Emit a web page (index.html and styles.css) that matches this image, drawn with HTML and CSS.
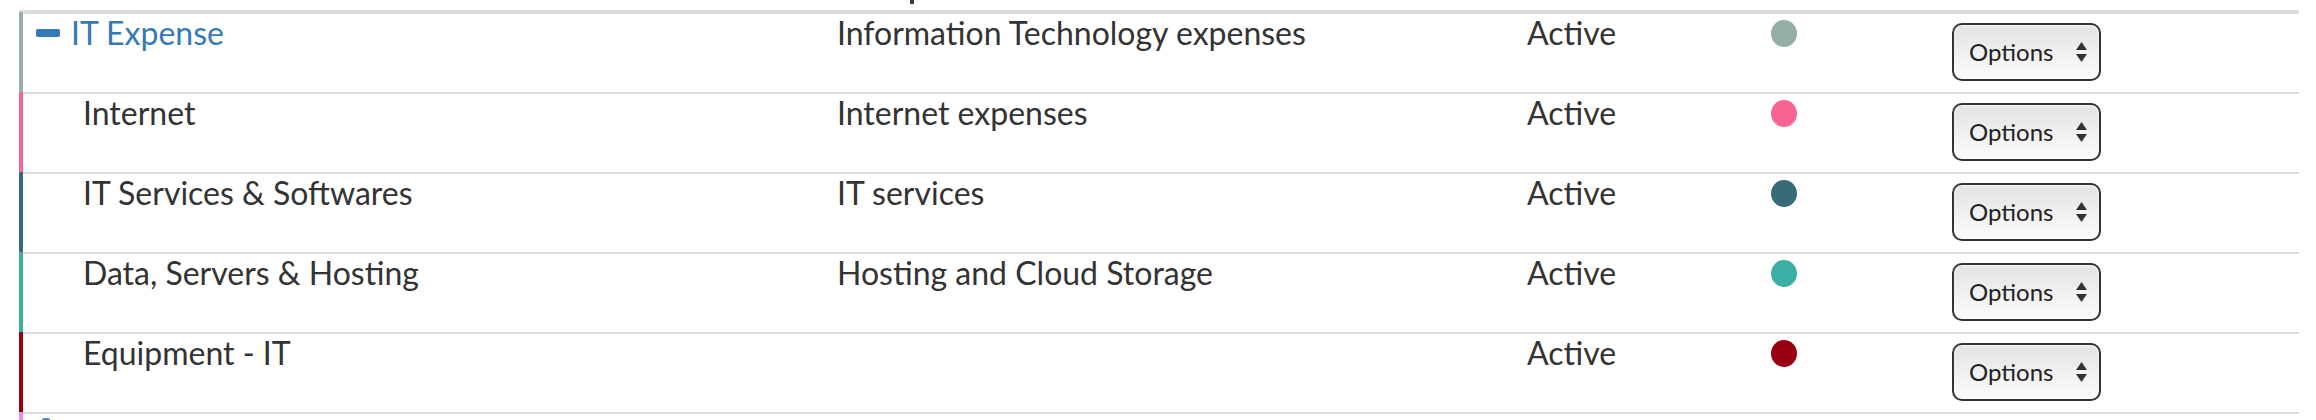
FILE: index.html
```html
<!DOCTYPE html>
<html>
<head>
<meta charset="utf-8">
<link rel="stylesheet" href="styles.css">
</head>
<body>
<div class="top-strip"><span class="tick"></span></div>
<div class="table">
  <div class="row parent" style="--c:#96afa4">
    <div class="cell c1"><span class="minus"></span><a class="link">IT Expense</a></div>
    <div class="cell c2">Information Technology expenses</div>
    <div class="cell c3">Active</div>
    <div class="cell c4"><span class="dot"></span></div>
    <div class="cell c5"><div class="select"><span>Options</span><svg class="arrows" width="11" height="20" viewBox="0 0 11 20"><path d="M5.5 0L11 8H0Z M0 12H11L5.5 20Z" fill="#333"/></svg></div></div>
  </div>
  <div class="row" style="--c:#f86391">
    <div class="cell c1 child">Internet</div>
    <div class="cell c2">Internet expenses</div>
    <div class="cell c3">Active</div>
    <div class="cell c4"><span class="dot"></span></div>
    <div class="cell c5"><div class="select"><span>Options</span><svg class="arrows" width="11" height="20" viewBox="0 0 11 20"><path d="M5.5 0L11 8H0Z M0 12H11L5.5 20Z" fill="#333"/></svg></div></div>
  </div>
  <div class="row" style="--c:#386b7a">
    <div class="cell c1 child">IT Services &amp; Softwares</div>
    <div class="cell c2">IT services</div>
    <div class="cell c3">Active</div>
    <div class="cell c4"><span class="dot"></span></div>
    <div class="cell c5"><div class="select"><span>Options</span><svg class="arrows" width="11" height="20" viewBox="0 0 11 20"><path d="M5.5 0L11 8H0Z M0 12H11L5.5 20Z" fill="#333"/></svg></div></div>
  </div>
  <div class="row" style="--c:#3aafa3">
    <div class="cell c1 child">Data, Servers &amp; Hosting</div>
    <div class="cell c2">Hosting and Cloud Storage</div>
    <div class="cell c3">Active</div>
    <div class="cell c4"><span class="dot"></span></div>
    <div class="cell c5"><div class="select"><span>Options</span><svg class="arrows" width="11" height="20" viewBox="0 0 11 20"><path d="M5.5 0L11 8H0Z M0 12H11L5.5 20Z" fill="#333"/></svg></div></div>
  </div>
  <div class="row" style="--c:#99000f">
    <div class="cell c1 child">Equipment - IT</div>
    <div class="cell c2"></div>
    <div class="cell c3">Active</div>
    <div class="cell c4"><span class="dot"></span></div>
    <div class="cell c5"><div class="select"><span>Options</span><svg class="arrows" width="11" height="20" viewBox="0 0 11 20"><path d="M5.5 0L11 8H0Z M0 12H11L5.5 20Z" fill="#333"/></svg></div></div>
  </div>
  <div class="row" style="--c:#e592e6">
    <div class="cell c1"><span class="plus"></span></div>
  </div>
</div>
</body>
</html>
```
FILE: styles.css
```css
html, body {
  margin: 0;
  padding: 0;
  background: #fff;
  overflow: hidden;
}
body {
  font-family: Lato, "Open Sans", sans-serif;
  font-size: 32px;
  color: #333;
}
.top-strip {
  height: 10px;
  padding-left: 910px;
  box-sizing: border-box;
}
.tick {
  display: block;
  width: 4px;
  height: 4px;
  background: #3a3a3a;
}
.table {
  margin-left: 19px;
  width: 2280px;
  border-top: 2px solid #ddd;
}
.row {
  display: grid;
  grid-template-columns: 814px 690px 244px 181px 1fr;
  height: 80px;
  box-sizing: border-box;
  border-left: 4px solid var(--c);
  box-shadow: inset 0 2px 0 #ddd;
  --c: #ccc;
}
.cell {
  padding-top: 2px;
  line-height: 38px;
  white-space: nowrap;
}
.c1 {
  display: flex;
  align-items: center;
  align-self: start;
  height: 38px;
  padding-left: 13px;
}
.c1.child {
  padding-left: 60px;
}
.minus {
  display: inline-block;
  width: 24px;
  height: 8px;
  border-radius: 2px;
  background: #337ab7;
  margin-right: 11px;
}
.plus {
  display: inline-block;
  width: 8px;
  height: 30px;
  border-radius: 2px;
  background: #4d8cc4;
  margin-left: 6px;
  align-self: flex-start;
  margin-top: 4px;
}
.link {
  color: #337ab7;
  text-decoration: none;
}
.c4 {
  padding-top: 8px;
}
.dot {
  display: block;
  width: 26px;
  height: 27px;
  border-radius: 50%;
  background: var(--c);
}
.c5 {
  padding-top: 11px;
}
.select {
  display: flex;
  align-items: center;
  width: 149px;
  height: 58px;
  box-sizing: border-box;
  border: 2px solid #333;
  border-radius: 10px;
  background: linear-gradient(#e3e3e3, #f2f2f2 60%, #fcfcfc);
  box-shadow: inset 0 1px 2px rgba(255,255,255,0.8);
  padding-left: 15px;
  padding-right: 12px;
  font-size: 24px;
  line-height: 1;
  color: #222;
}
.arrows {
  margin-left: auto;
}
```
